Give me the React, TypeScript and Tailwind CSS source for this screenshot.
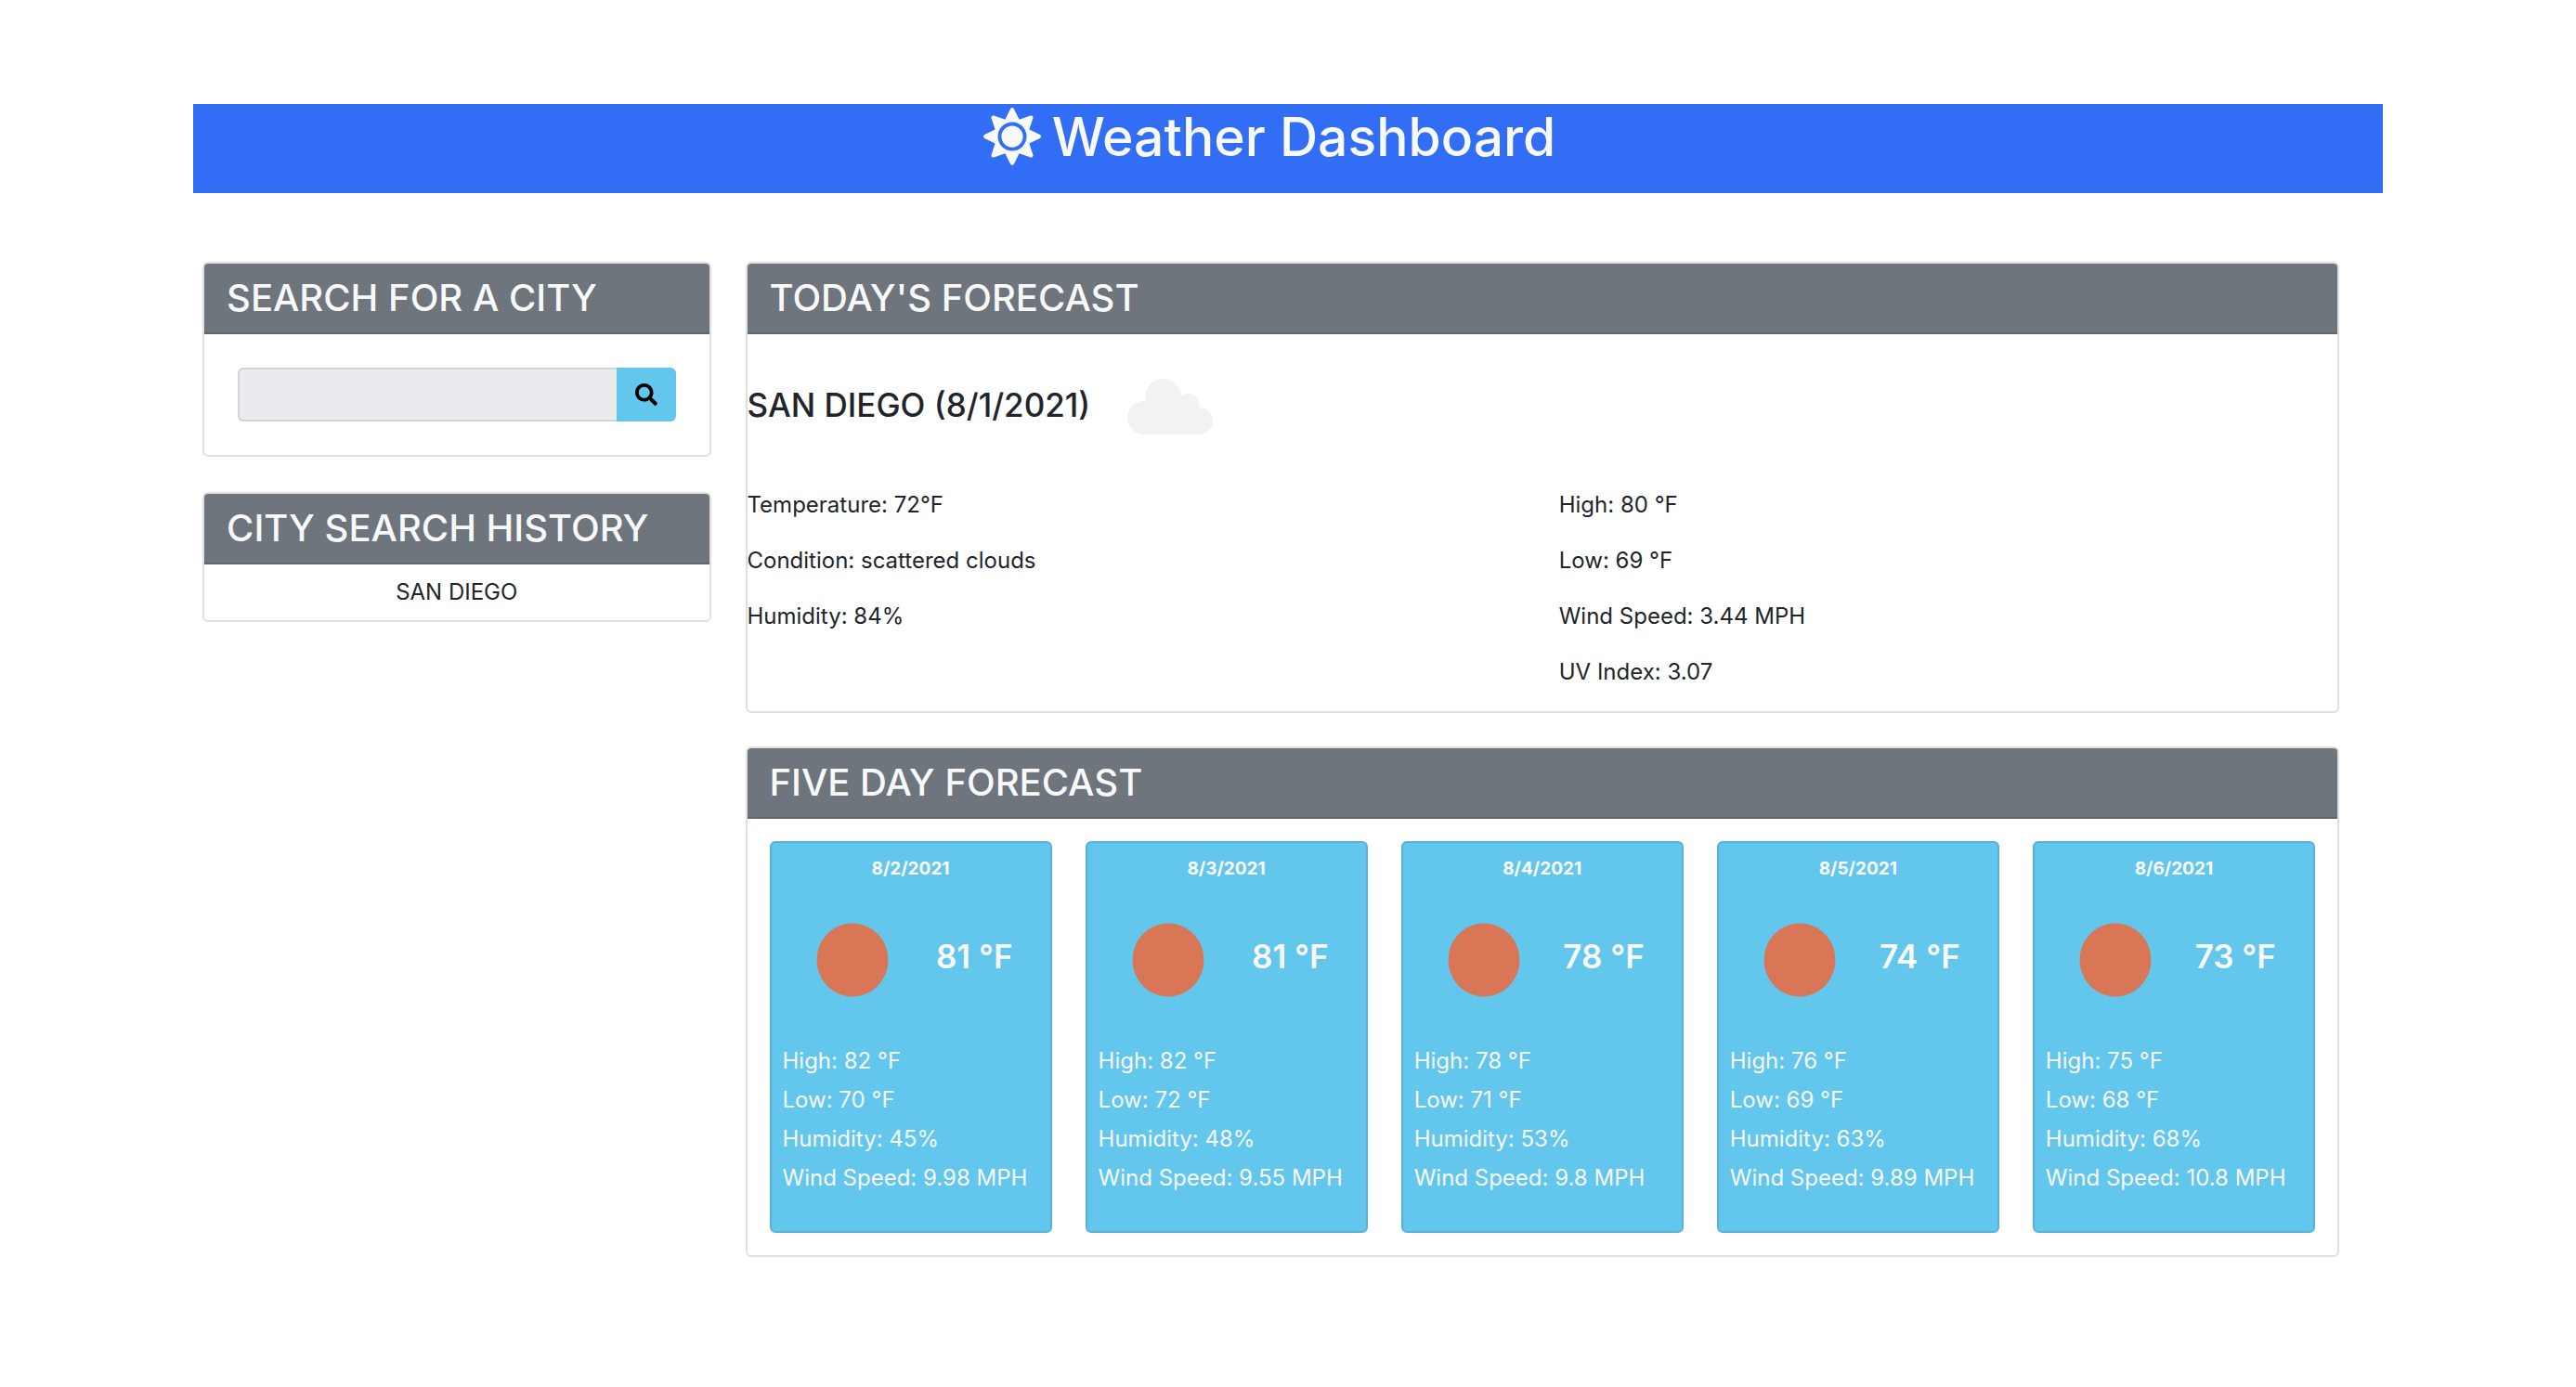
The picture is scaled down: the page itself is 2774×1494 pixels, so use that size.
import type { ReactNode } from "react";
import { FaSearch, FaSun } from "react-icons/fa";

type Day = {
  date: string;
  temp: number;
  high: number;
  low: number;
  humidity: number;
  wind: string;
};

const days: Day[] = [
  { date: "8/2/2021", temp: 81, high: 82, low: 70, humidity: 45, wind: "9.98" },
  { date: "8/3/2021", temp: 81, high: 82, low: 72, humidity: 48, wind: "9.55" },
  { date: "8/4/2021", temp: 78, high: 78, low: 71, humidity: 53, wind: "9.8" },
  { date: "8/5/2021", temp: 74, high: 76, low: 69, humidity: 63, wind: "9.89" },
  { date: "8/6/2021", temp: 73, high: 75, low: 68, humidity: 68, wind: "10.8" },
];

function Card({ title, children }: { title: string; children: ReactNode }) {
  return (
    <section className="overflow-hidden rounded-md border-2 border-[#dfdfdf] bg-white">
      <h2 className="border-b-2 border-[#5f666d] bg-[#6e757c] px-6 py-3 text-[40px] leading-[50px] font-medium text-[#f8f9fa]">
        {title}
      </h2>
      {children}
    </section>
  );
}

function Cloud() {
  return (
    <svg viewBox="0 0 92 60" className="h-[60px] w-[92px]" fill="#f2f2f2" aria-hidden="true">
      <circle cx="18" cy="42" r="18" />
      <circle cx="38.6" cy="19.5" r="19.5" />
      <circle cx="65.5" cy="27.5" r="11.5" />
      <circle cx="77.5" cy="45.5" r="14.5" />
      <path d="M18 25H60L77 33V60H18Z" />
    </svg>
  );
}

function DayCard({ day }: { day: Day }) {
  return (
    <article className="rounded-md border-2 border-[#58b2d6] bg-[#62c6ed] px-3 pt-3 pb-9 text-[#f8f9fa]">
      <h3 className="text-center text-[19px] leading-8 font-bold text-white">{day.date}</h3>
      <div className="flex items-center justify-between pt-[42px] pr-7 pl-9">
        <svg viewBox="0 0 78 80" className="h-20 w-[78px]" aria-hidden="true">
          <ellipse cx="39" cy="40" rx="38.5" ry="39.5" fill="#d87655" />
        </svg>
        <p className="pb-2 text-[35px] leading-[70px] font-semibold">{day.temp} °F</p>
      </div>
      <ul className="pt-12 text-[24px] leading-[42px]">
        <li>High: {day.high} °F</li>
        <li>Low: {day.low} °F</li>
        <li>Humidity: {day.humidity}%</li>
        <li>Wind Speed: {day.wind} MPH</li>
      </ul>
    </article>
  );
}

export default function App() {
  return (
    <div className="min-h-screen bg-white px-[7.5%] pt-28 pb-32 font-['Inter',sans-serif] text-[#212529]">
      <header className="flex h-24 justify-center bg-[#326df5] pr-10 text-[#f8f9fa]">
        <h1 className="flex items-start gap-3 text-[57px] leading-[72px] font-medium">
          <FaSun className="mt-1 size-[62px]" aria-hidden="true" />
          Weather Dashboard
        </h1>
      </header>

      <main className="grid grid-cols-[547fr_1715fr] items-start gap-[37px] pt-[74px] pr-[47px] pl-[10px]">
        <aside className="grid gap-[38px]">
          <Card title="SEARCH FOR A CITY">
            <form className="flex p-9" onSubmit={(e) => e.preventDefault()}>
              <input
                type="text"
                aria-label="City"
                className="h-[58px] min-w-0 flex-1 rounded-l-md border-2 border-r-0 border-[#ced4da] bg-[#eaebef] px-4 text-[24px] outline-none"
              />
              <button
                type="submit"
                aria-label="Search"
                className="flex h-[58px] w-16 items-center justify-center rounded-r-md bg-[#62c6ed] text-black"
              >
                <FaSearch className="size-6" />
              </button>
            </form>
          </Card>
          <Card title="CITY SEARCH HISTORY">
            <ul className="py-3 text-center text-[24px] leading-9">
              <li>SAN DIEGO</li>
            </ul>
          </Card>
        </aside>

        <div className="grid gap-9">
          <Card title="TODAY'S FORECAST">
            <div className="flex items-center gap-10 pt-12">
              <h3 className="pb-1 text-[35px] leading-[56px] font-medium">SAN DIEGO (8/1/2021)</h3>
              <Cloud />
            </div>
            <div className="grid grid-cols-2 gap-9 pt-[58px] pb-6 text-[24px] leading-9">
              <div className="flex flex-col gap-6">
                <p>Temperature: 72°F</p>
                <p>Condition: scattered clouds</p>
                <p>Humidity: 84%</p>
              </div>
              <div className="flex flex-col gap-6">
                <p>High: 80 °F</p>
                <p>Low: 69 °F</p>
                <p>Wind Speed: 3.44 MPH</p>
                <p>UV Index: 3.07</p>
              </div>
            </div>
          </Card>
          <Card title="FIVE DAY FORECAST">
            <div className="grid grid-cols-5 gap-9 p-6">
              {days.map((day) => (
                <DayCard key={day.date} day={day} />
              ))}
            </div>
          </Card>
        </div>
      </main>
    </div>
  );
}
